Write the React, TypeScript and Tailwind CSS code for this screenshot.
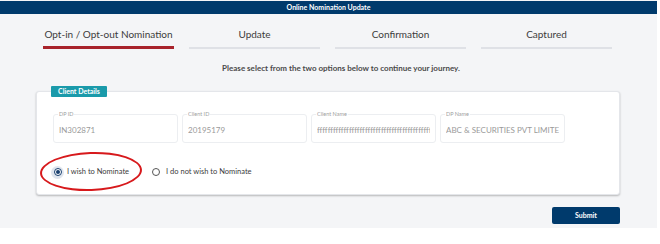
export default function App() {
  const steps = ["Opt-in / Opt-out Nomination", "Update", "Confirmation", "Captured"];
  const fields = [
    { label: "DP ID", value: "IN302871" },
    { label: "Client ID", value: "20195179" },
    { label: "Client Name", value: "ffffffffffffffffffffffffffffffffffffffffffffffffffffffffff" },
    { label: "DP Name", value: "ABC & SECURITIES PVT  LIMITED" },
  ];

  return (
    <div className="w-[660px] h-[244px] bg-white font-['Lato','Liberation_Sans',sans-serif]">
      <div className="w-[657px] h-[228px] bg-[#f4f5f7] flex flex-col">
        {/* top bar */}
        <div className="mt-px h-[13px] bg-[#003a6c] flex items-center justify-center">
          <span className="text-[7px] font-bold text-white">Online Nomination Update</span>
        </div>

        {/* steps */}
        <div className="flex gap-[15px] pl-[43px] mt-[13px]">
          {steps.map((s, i) => (
            <div key={s} className="w-[131px] flex flex-col items-center">
              <span className="text-[10px] leading-[14px] text-[#3c3c3c]">{s}</span>
              <div className={`w-full ${i === 0 ? "mt-[5px] h-[3px] bg-[#a8232b]" : "mt-[6px] h-[2px] bg-[#dfe1e6]"}`} />
            </div>
          ))}
        </div>

        <p className="mt-[14px] pl-[25px] text-center text-[8px] font-bold text-[#4a4a4a] leading-[10px]">
          Please select from the two options below to continue your journey.
        </p>

        {/* card */}
        <div className="relative ml-[36px] mt-[18px] w-[584px] h-[104px] bg-white rounded-[3px] border border-[#e4e6ea] shadow-[0_1px_2px_rgba(0,0,0,0.25)]">
          <div className="-mt-[6px] ml-[14px] w-[56px] h-[11px] bg-[#1a9aaa] rounded-[1px] flex items-center justify-center">
            <span className="text-[7px] font-bold text-white">Client Details</span>
          </div>

          <div className="flex gap-[4px] ml-[16px] mt-[17px]">
            {fields.map((f) => (
              <div key={f.label} className="relative w-[125px] h-[29px] border border-[#eceef1] rounded-[3px] flex items-center px-[5px]">
                <span className="absolute -top-[4px] left-[4px] bg-white px-[1px] text-[5.5px] leading-[7px] text-[#a0a0a0]">{f.label}</span>
                <span className="mt-[3px] w-full text-[8px] text-[#9a9a9a] whitespace-nowrap overflow-hidden">{f.value}</span>
              </div>
            ))}
          </div>

          <div className="flex items-center ml-[14px] mt-[22px] h-[14px]">
            <div className="w-[13px] h-[13px] rounded-full bg-[#dfe5ee] flex items-center justify-center">
              <div className="w-[8px] h-[8px] rounded-full border border-[#173e6e] flex items-center justify-center bg-white">
                <div className="w-[4px] h-[4px] rounded-full bg-[#173e6e]" />
              </div>
            </div>
            <span className="ml-[3px] text-[7.5px] text-[#3c3c3c]">I wish to Nominate</span>
            <div className="ml-[23px] w-[8px] h-[8px] rounded-full border border-[#555] bg-white" />
            <span className="ml-[6px] text-[7.5px] text-[#3c3c3c]">I do not wish to Nominate</span>
          </div>

          {/* annotation */}
          <div className="absolute left-[3px] top-[60px] w-[102px] h-[39px] rounded-[50%] border-[2.5px] border-[#d7191c] -rotate-2" />
        </div>

        <div className="ml-[552px] mt-[12px] w-[68px] h-[17px] bg-[#003a6c] rounded-[2px] flex items-center justify-center">
          <span className="text-[7px] font-bold text-white">Submit</span>
        </div>
      </div>
    </div>
  );
}
